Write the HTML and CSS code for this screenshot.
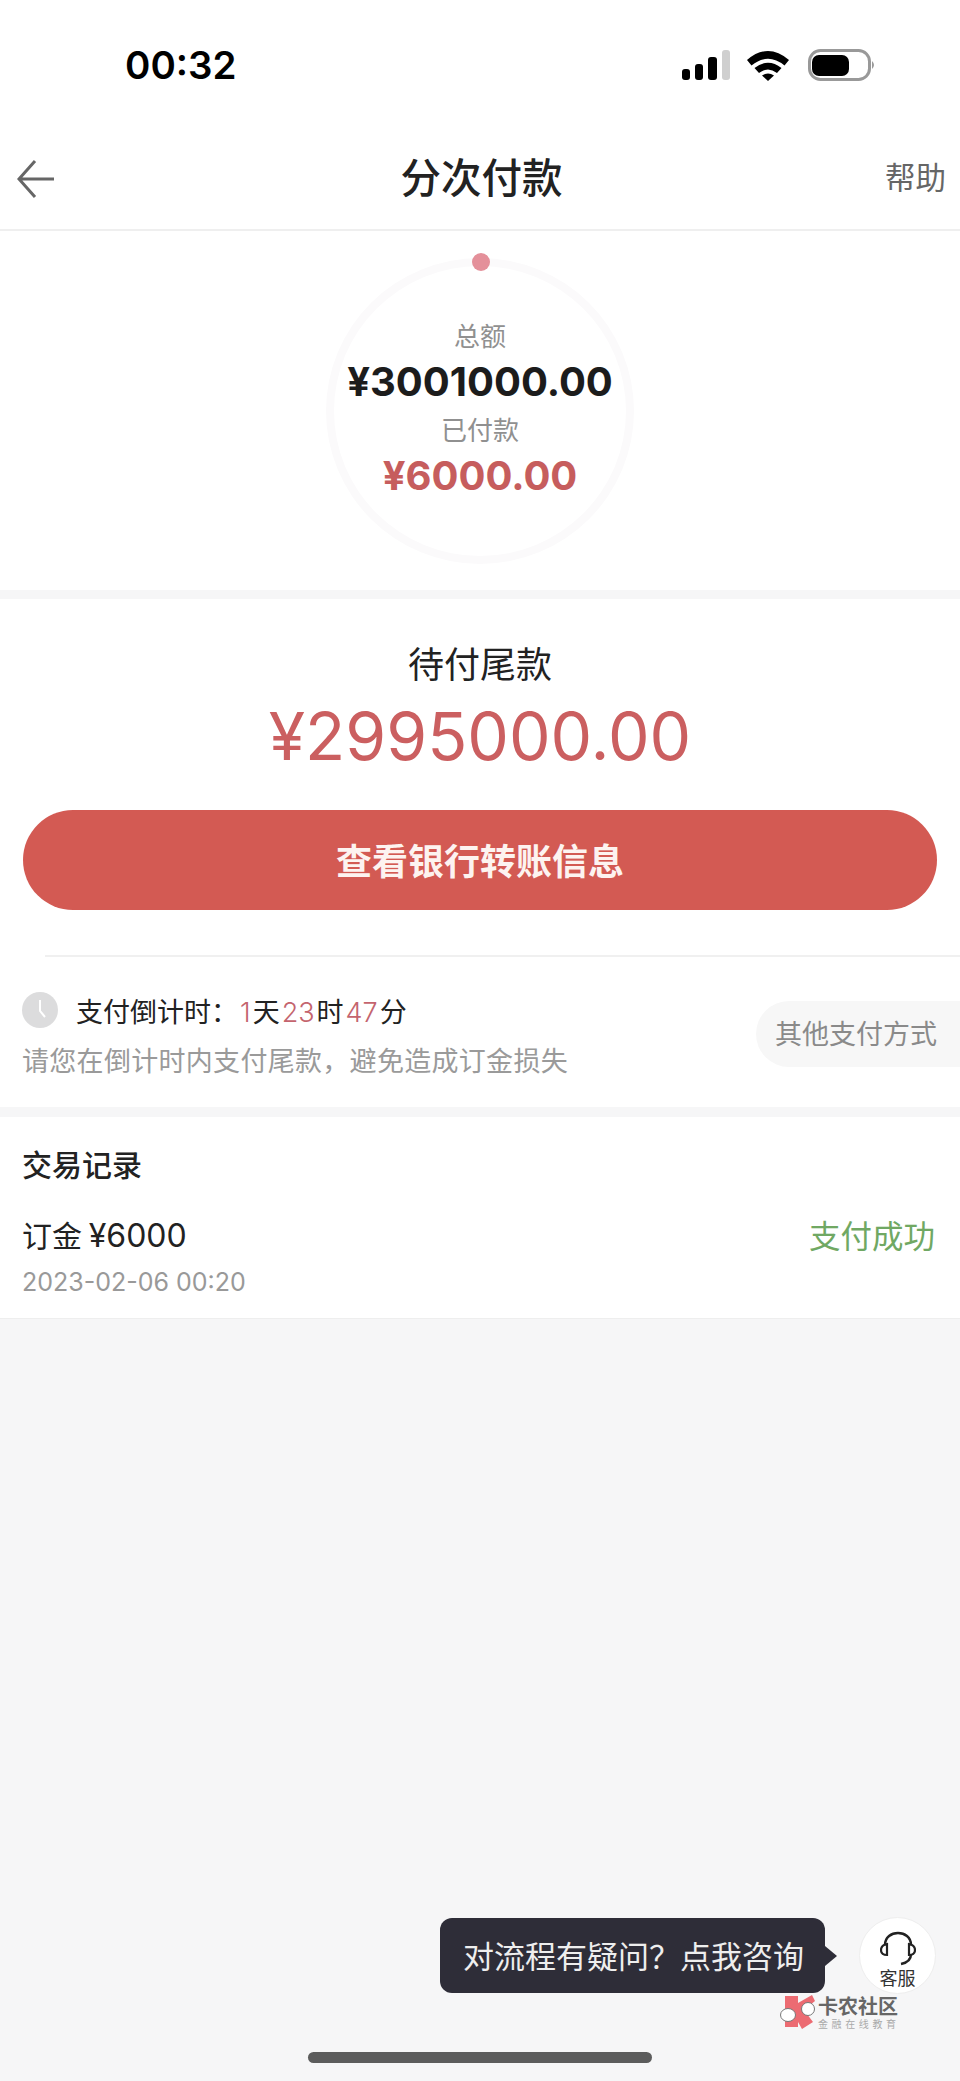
FILE: index.html
```html
<!DOCTYPE html>
<html lang="zh-CN">
<head>
<meta charset="UTF-8">
<meta name="viewport" content="width=device-width, initial-scale=1.0">
<title>分次付款</title>
<link rel="stylesheet" href="styles.css">
</head>
<body>
<div id="page">
    <div class="status-bar">
        <span class="status-time">00:32</span>
        <svg class="status-icons" width="200" height="36" viewBox="0 0 200 36">
            <!-- signal -->
            <rect x="2" y="20" width="8" height="11" rx="3" fill="#000"/>
            <rect x="15" y="15" width="8" height="16" rx="3" fill="#000"/>
            <rect x="28" y="8" width="9" height="23" rx="3" fill="#000"/>
            <rect x="42" y="1" width="8" height="30" rx="3" fill="#cfcfcf"/>
            <!-- wifi -->
            <path d="M67 11 Q88 -7 109 11 L104.500 16.500 Q88 3 71.500 16.500Z" fill="#000"/>
            <path d="M74.500 19 Q88 8.500 101.500 19 L97 24 Q88 17 79 24Z" fill="#000"/>
            <path d="M82 26.500 Q88 22.500 94 26.500 L88 32Z" fill="#000"/>
            <!-- battery -->
            <rect x="129.500" y="1.500" width="60" height="29" rx="11" fill="#fff" stroke="#999" stroke-width="3"/>
            <rect x="132" y="6" width="37" height="21" rx="7" fill="#000"/>
            <path d="M192 12 Q196 16 192 20Z" fill="#999"/>
        </svg>
    </div>

    <div class="nav">
        <svg class="nav-back" width="38" height="38" viewBox="0 0 38 38">
            <path d="M18 1 L2 19 L18 37 M2 19 H37" fill="none" stroke="#666" stroke-width="3"/>
        </svg>
        <h1 class="nav-title">分次付款</h1>
        <span class="nav-help">帮助</span>
    </div>

    <div class="card summary">
        <div class="ring">
            <span class="ring-dot"></span>
            <div class="ring-label">总额</div>
            <div class="ring-total">¥3001000.00</div>
            <div class="ring-label">已付款</div>
            <div class="ring-paid">¥6000.00</div>
        </div>
    </div>

    <div class="card balance">
        <div class="balance-label">待付尾款</div>
        <div class="balance-amount">¥2995000.00</div>
        <button class="pay-btn">查看银行转账信息</button>
        <div class="countdown">
            <div class="countdown-text">
                <div class="countdown-line">
                    <svg class="clock" width="36" height="36" viewBox="0 0 36 36">
                        <circle cx="18" cy="18" r="18" fill="#dcdcdd"/>
                        <path d="M18 8 V19 L23 25" fill="none" stroke="#fff" stroke-width="2"/>
                    </svg>
                    <span>支付倒计时：<em>1</em>天<em>23</em>时<em>47</em>分</span>
                </div>
                <div class="countdown-hint">请您在倒计时内支付尾款，避免造成订金损失</div>
            </div>
            <div class="other-pay">其他支付方式</div>
        </div>
    </div>

    <div class="card records">
        <h2 class="records-title">交易记录</h2>
        <div class="record-row">
            <div>
                <div class="record-name">订金 <span class="record-money">¥6000</span></div>
                <div class="record-date">2023-02-06 00:20</div>
            </div>
            <div class="record-state">支付成功</div>
        </div>
    </div>

    <div class="help-tip">对流程有疑问？点我咨询</div>
    <div class="service">
        <svg width="36" height="36" viewBox="0 0 36 36">
            <path d="M5 19 V15 C5 -1 31 -1 31 15 V19 M31 24 C31 30 26 33 21 34" fill="none" stroke="#222" stroke-width="2.500"/>
            <path d="M7 14 C2 15 1 18 1 20 C1 23 3 25 7 25Z M29 14 C34 15 35 18 35 20 C35 23 33 25 29 25Z" fill="#fff" stroke="#222" stroke-width="2.200"/>
        </svg>
        <span>客服</span>
    </div>

    <div class="brand">
        <svg width="36" height="34" viewBox="0 0 36 34">
            <path d="M5 1 H18 V8 L32 0 L35 6 L24 15 L33 27 L22 34 L18 27 V32 H5Z" fill="#ec6b72"/>
            <ellipse cx="8" cy="20" rx="7.500" ry="6.500" fill="#fff" stroke="#777" stroke-width="1"/>
            <ellipse cx="28" cy="14" rx="6.500" ry="6.500" fill="#fff" stroke="#777" stroke-width="1"/>
        </svg>
        <div>
            <div class="brand-name">卡农社区</div>
            <div class="brand-sub">金融在线教育</div>
        </div>
    </div>

    <div class="home-bar"></div>
</div>
</body>
</html>
```

FILE: styles.css
```css
* {
    box-sizing: border-box;
}
body {
    margin: 0;
    font-family: "Noto Sans CJK SC", Inter, sans-serif;
    background-color: #f6f6f7;
}
#page {
    position: relative;
    width: 960px;
    height: 2081px;
    overflow: hidden;
    background-color: #f6f6f7;
}
.status-bar {
    height: 110px;
    padding: 42px 0 0 125px;
    display: flex;
    justify-content: space-between;
    align-items: flex-start;
    background-color: #fff;
}
.status-time {
    font-family: Inter, sans-serif;
    font-size: 38.500px;
    font-weight: 600;
    line-height: 46px;
    color: #000;
}
.status-icons {
    margin: 7px 80px 0 0;
}
.nav {
    height: 121px;
    padding: 16px 14px 0 17px;
    display: grid;
    grid-template-columns: 1fr auto 1fr;
    align-items: center;
    background-color: #fff;
    border-bottom: 2px solid #efefef;
}
.nav-back {
    margin-top: 2px;
}
.nav-title {
    margin: -4px 0 0 0;
    font-size: 40.500px;
    font-weight: 500;
    color: #222;
}
.nav-help {
    justify-self: end;
    margin-top: -4px;
    font-size: 30.500px;
    color: #666;
}
.card {
    background-color: #fff;
}
.summary {
    height: 359px;
    margin-bottom: 9px;
    padding-top: 27px;
}
.ring {
    position: relative;
    width: 308px;
    height: 306px;
    margin: 0 auto;
    padding-top: 51px;
    border: 8px solid #fbfafb;
    border-radius: 50%;
    text-align: center;
}
.ring-dot {
    position: absolute;
    top: -13px;
    left: 138px;
    width: 18px;
    height: 18px;
    border-radius: 50%;
    background-color: #e4909a;
}
.ring-label {
    font-size: 26px;
    line-height: 36px;
    color: #909090;
}
.ring-total {
    font-family: Inter, sans-serif;
    font-size: 40px;
    font-weight: 700;
    line-height: 58px;
    color: #1c1c1c;
}
.ring-paid {
    font-family: Inter, sans-serif;
    font-size: 40px;
    font-weight: 700;
    line-height: 58px;
    color: #c65d5d;
}
.balance {
    height: 508px;
    padding-top: 38px;
    margin-bottom: 10px;
    text-align: center;
}
.balance-label {
    font-size: 36px;
    line-height: 50px;
    color: #222;
}
.balance-amount {
    margin-top: 9px;
    font-family: Inter, sans-serif;
    font-size: 66px;
    line-height: 80px;
    color: #cb5f60;
}
.pay-btn {
    display: block;
    width: 914px;
    height: 100px;
    margin: 34px 0 0 23px;
    padding: 0 0 2px 0;
    border: none;
    border-radius: 50px;
    background-color: #d35a53;
    font-family: inherit;
    font-size: 36px;
    font-weight: 700;
    color: #fdf3f0;
}
.countdown {
    margin: 45px 0 0 45px;
    padding: 33px 0 0 0;
    display: flex;
    justify-content: space-between;
    border-top: 2px solid #f0f0f0;
    text-align: left;
}
.countdown-text {
    margin-left: -23px;
}
.countdown-line {
    display: flex;
    align-items: center;
    gap: 18px;
    height: 40px;
    font-size: 27px;
    color: #222;
}
.countdown-line em {
    margin: 0 2px;
    font-family: Inter, sans-serif;
    font-style: normal;
    font-weight: 300;
    color: #c4646e;
}
.countdown-hint {
    margin-top: 11px;
    font-size: 27px;
    line-height: 38px;
    letter-spacing: 0.300px;
    color: #9a9a9a;
}
.other-pay {
    width: 204px;
    height: 66px;
    margin-top: 11px;
    padding-left: 19px;
    border-radius: 33px 0 0 33px;
    background-color: #f7f7f7;
    font-size: 27px;
    line-height: 64px;
    color: #8a8a8a;
}
.records {
    height: 202px;
    padding: 25px 25px 0 22px;
    border-bottom: 1px solid #eee;
}
.records-title {
    margin: 0;
    font-size: 30px;
    font-weight: 500;
    line-height: 42px;
    color: #222;
}
.record-row {
    margin-top: 29px;
    display: flex;
    justify-content: space-between;
    align-items: flex-start;
}
.record-name {
    font-size: 30px;
    line-height: 42px;
    color: #222;
}
.record-money {
    font-family: Inter, sans-serif;
    font-size: 32px;
}
.record-date {
    margin-top: 9px;
    font-family: Inter, sans-serif;
    font-size: 25px;
    line-height: 32px;
    color: #999;
}
.record-state {
    font-size: 31.500px;
    line-height: 42px;
    color: #70a863;
}
.help-tip {
    position: absolute;
    left: 440px;
    top: 1918px;
    width: 385px;
    height: 75px;
    padding-left: 23px;
    border-radius: 12px;
    background-color: #2e2d38;
    font-size: 31px;
    line-height: 73px;
    white-space: nowrap;
    color: #eee;
}
.help-tip::after {
    content: "";
    position: absolute;
    left: 100%;
    top: 28px;
    border-left: 12px solid #2e2d38;
    border-top: 10px solid transparent;
    border-bottom: 10px solid transparent;
}
.service {
    position: absolute;
    left: 859px;
    top: 1917px;
    width: 77px;
    height: 77px;
    padding-top: 12px;
    display: flex;
    flex-direction: column;
    align-items: center;
    border: 1px solid #eee;
    border-radius: 50%;
    background-color: #fff;
    font-size: 18px;
    line-height: 22px;
    color: #333;
}
.brand {
    position: absolute;
    left: 780px;
    top: 1995px;
    display: flex;
    gap: 2px;
}
.brand-name {
    font-size: 20px;
    font-weight: 700;
    line-height: 22px;
    color: #666;
}
.brand-sub {
    font-size: 10px;
    line-height: 14px;
    letter-spacing: 3.600px;
    color: #aaa;
}
.home-bar {
    position: absolute;
    left: 308px;
    top: 2052px;
    width: 344px;
    height: 11px;
    border-radius: 6px;
    background-color: #5c5c5c;
}
```
